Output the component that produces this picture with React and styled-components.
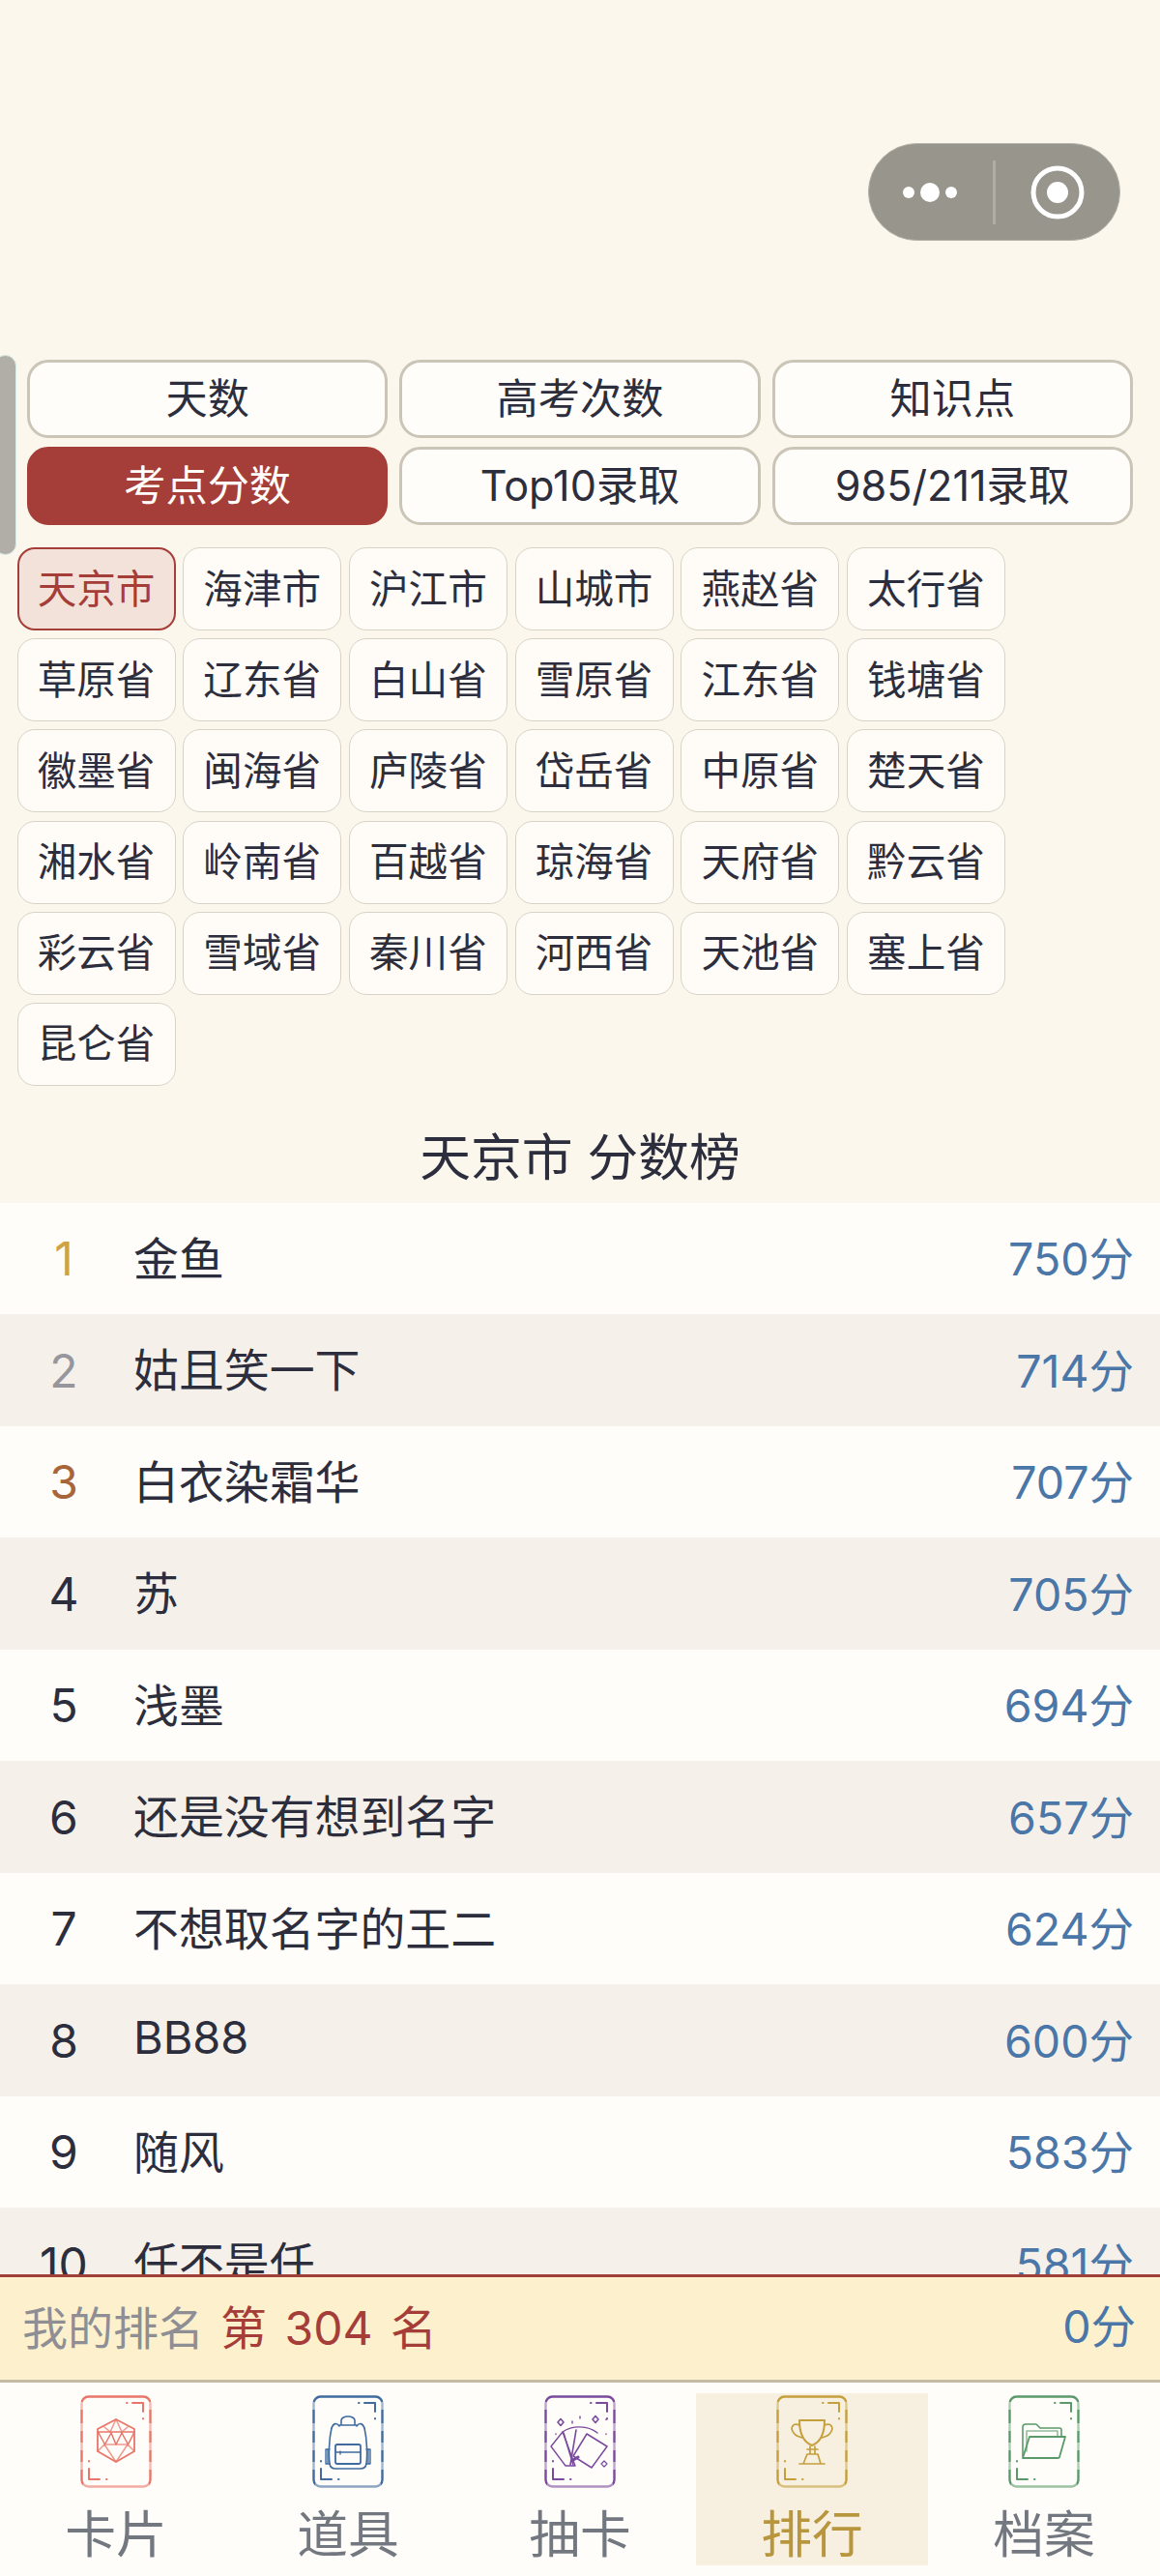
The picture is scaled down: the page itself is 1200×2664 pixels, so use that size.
import React from "react";
import styled, { createGlobalStyle } from "styled-components";

const Global = createGlobalStyle`
  html, body { margin: 0; padding: 0; background: #fbf7ec; }
  * { box-sizing: border-box; }
`;

const Page = styled.div`
  position: relative;
  width: 1200px;
  height: 2664px;
  display: flex;
  flex-direction: column;
  overflow: hidden;
  background: #fbf7ec;
  color: #2d2e3d;
  font-family: "Inter", "Noto Sans CJK SC", "Noto Sans", sans-serif;
  padding-top: 372px;
`;

const Capsule = styled.div`
  position: absolute;
  left: 898px;
  top: 148px;
  width: 261px;
  height: 101px;
  border-radius: 51px;
  background: #98958d;
  border: 1px solid #b4b1a9;
  display: flex;
  align-items: center;
`;
const CapsulePart = styled.div`
  flex: 1;
  height: 100%;
  display: flex;
  align-items: center;
  justify-content: center;
`;
const CapsuleDivider = styled.div`
  width: 3px;
  height: 66px;
  background: #b0ada6;
`;
const Handle = styled.div`
  position: absolute;
  left: -6px;
  top: 367px;
  width: 23px;
  height: 207px;
  border-radius: 12px;
  background: #b0aea6;
  border: 1px solid #d6ebe8;
`;

const TabGrid = styled.div`
  display: grid;
  grid-template-columns: repeat(3, 1fr);
  grid-auto-rows: 81px;
  gap: 9px 12px;
  padding: 0 28px;
`;
const TabBtn = styled.div`
  display: flex;
  align-items: center;
  justify-content: center;
  padding-bottom: 8px;
  border-radius: 22px;
  font-size: 43.2px;
  background: ${(p) => (p.$active ? "#a53d38" : "#fffdf9")};
  color: ${(p) => (p.$active ? "#fffdf9" : "#2d2e3d")};
  border: 3px solid ${(p) => (p.$active ? "#a53d38" : "#cbc5b7")};
`;

const ChipWrap = styled.div`
  display: flex;
  flex-wrap: wrap;
  gap: 8.2px 7.7px;
  padding: 23px 0 0 17.5px;
`;
const Chip = styled.div`
  width: 164px;
  height: 86px;
  display: flex;
  align-items: center;
  justify-content: center;
  padding-bottom: 6px;
  border-radius: 18px;
  font-size: 40.6px;
  background: ${(p) => (p.$active ? "#f3e2d9" : "#fffcf7")};
  color: ${(p) => (p.$active ? "#a53d38" : "#2d2e3d")};
  border: ${(p) => (p.$active ? "2.5px solid #a53d38" : "1.6px solid #d8d3c6")};
`;

const Title = styled.div`
  height: 121px;
  padding-top: 27px;
  line-height: 94px;
  text-align: center;
  font-size: 52.8px;
`;

const List = styled.div`
  flex: 1;
  min-height: 0;
  overflow: hidden;
`;
const Row = styled.div`
  height: 115.5px;
  display: flex;
  align-items: center;
  padding: 0 27px 0 26px;
  background: ${(p) => (p.$alt ? "#f5f1ea" : "#fffdf9")};
`;
const Rank = styled.div`
  width: 80px;
  text-align: center;
  font-size: 48px;
  color: ${(p) => p.$color};
`;
const Name = styled.div`
  flex: 1;
  margin: -6px 0 0 32px;
  font-size: 46.9px;
`;
const Score = styled.div`
  margin-top: -6px;
  font-size: 46.5px;
  color: #4a76a8;
`;

const MyBar = styled.div`
  height: 112px;
  flex: none;
  display: flex;
  align-items: center;
  padding: 0 25px 6px 23px;
  background: #fcf0cd;
  border-top: 3px solid #a04038;
  border-bottom: 3px solid #c5bca8;
  font-size: 47px;
`;
const MyLabel = styled.span`
  margin-top: -2px;
  color: #8e8e94;
`;
const MyRank = styled.span`
  flex: 1;
  margin: -2px 0 0 17px;
  font-size: 48px;
  word-spacing: 5px;
  color: #a53d38;
`;

const Nav = styled.div`
  height: 200px;
  flex: none;
  display: grid;
  grid-template-columns: repeat(5, 1fr);
  align-items: start;
  padding-top: 11px;
  background: #fffdf9;
`;
const NavItem = styled.div`
  height: 178px;
  display: flex;
  flex-direction: column;
  align-items: center;
  background: ${(p) => (p.$active ? "#f7f0e0" : "transparent")};
  color: ${(p) => (p.$active ? "#b8963e" : "#737880")};
`;
const NavLabel = styled.div`
  margin-top: 16px;
  font-size: 52.8px;
  line-height: 60px;
`;
const IconSvg = styled.svg`
  display: block;
  width: 100px;
  height: 100px;
  filter: blur(0.45px);
`;

const Frame = ({ color, bg, children }) => (
  <IconSvg viewBox="20 5 100 100" fill="none" stroke={color} strokeLinecap="round" strokeLinejoin="round">
    <rect x="34.5" y="8.5" width="71" height="93" rx="7" strokeWidth="2.4" />
    <path d="M87 15H98V24M98 31v.5M81 15h.5" strokeWidth="2" />
    <path d="M42 83V94H53M60 94h.5M42 75v.5" strokeWidth="2" />
    <g fill={bg} stroke="none" opacity="0.5">
      {[18, 40, 60, 80].map((y) => (
        <React.Fragment key={y}>
          <rect x="30" y={y - 4} width="9" height="8" />
          <rect x="101" y={y - 4} width="9" height="8" />
        </React.Fragment>
      ))}
      <rect x="36" y="98" width="68" height="6" opacity="0.8" />
    </g>
    {children}
  </IconSvg>
);

const D20 = () => (
  <g strokeWidth="1.5">
    <path d="M70 32 89 42V65L70 76 51 65V42Z" strokeWidth="1.8" />
    <path d="M51 45H89M52 46l6.5 12 6.5-12 5 12 6-12 6.5 12 6-12" />
    <path d="M58 58H82L70 76ZM58 58 51 65M82 58 89 65M64 45 70 32 76 45M58 40 64 45M82 40 76 45" opacity="0.75" />
  </g>
);
const Backpack = () => (
  <g strokeWidth="1.4">
    <path d="M53 41c2-5 5-6 8-2M87 41c-2-5-5-6-8-2M63 37v-4c0-2 3-4 7-4s7 2 7 4v4M61 38h18" strokeWidth="1.6" />
    <path d="M53 41C50 54 50 70 51 78c.5 3 3 5 6 5h26c3 0 5.500-2 6-5 1-8 1-24-2-37" strokeWidth="1.6" />
    <rect x="57" y="58" width="26" height="20" rx="2" strokeWidth="1.8" />
    <path d="M57 66H83M62 65v3" />
    <path d="M51 63H47V78H51M89 63H93V78H89M49 64V77M91 64V77" />
  </g>
);
const Cards = () => (
  <g strokeWidth="1.4">
    <path d="M50 31.500 53 35 50 38.500 47 35ZM86 28.500 89 32 86 35.500 83 32Z" strokeWidth="1.6" />
    <path d="M62 34v2M70 29v2M97 32v.5M45 47v.5M97 47v.5" />
    <path d="M40 60 52 45 65 80 55 80Z" />
    <path d="M60 79 66 43M63 79 53 46" strokeWidth="1.6" />
    <path d="M52 45C62 38 78 38 88 46" />
    <path d="M77 47 98 60 82 82 63 70Z" strokeWidth="1.5" />
    <path d="M63 74 68 71" strokeWidth="3" />
    <path d="M95 75 98 78 95 81 92 78Z" strokeWidth="1.2" />
  </g>
);
const Trophy = () => (
  <g strokeWidth="1.7">
    <path d="M57 33H83C83 46 80 55 70 59 60 55 57 46 57 33Z" strokeWidth="2" />
    <path d="M57 38C50 35 47 41 51 46 53 49 56 50 60 51M83 38C90 35 93 41 89 46 87 49 84 50 80 51" />
    <path d="M68 60V68M73 60V68M65 63H76M65 68H76L79 78H61ZM57 78H83" />
  </g>
);
const Folder = () => (
  <g strokeWidth="1.6">
    <path d="M48 70V40C48 38 49 37 51 37H62L66 41H86C87 41 88 42 88 43V49" />
    <path d="M52 65V44H84V49" opacity="0.65" />
    <path d="M48 72 55 50H92L86 71C86 72 85 72 84 72Z" strokeWidth="1.8" />
  </g>
);

const tabs = ["天数", "高考次数", "知识点", "考点分数", "Top10录取", "985/211录取"];
const regions = [
  "天京市", "海津市", "沪江市", "山城市", "燕赵省", "太行省",
  "草原省", "辽东省", "白山省", "雪原省", "江东省", "钱塘省",
  "徽墨省", "闽海省", "庐陵省", "岱岳省", "中原省", "楚天省",
  "湘水省", "岭南省", "百越省", "琼海省", "天府省", "黔云省",
  "彩云省", "雪域省", "秦川省", "河西省", "天池省", "塞上省",
  "昆仑省",
];
const rows = [
  ["金鱼", 750], ["姑且笑一下", 714], ["白衣染霜华", 707], ["苏", 705], ["浅墨", 694],
  ["还是没有想到名字", 657], ["不想取名字的王二", 624], ["BB88", 600], ["随风", 583], ["任不是任", 581],
];
const rankColor = (i) => ["#cfa244", "#96969c", "#a8653a"][i] || "#2d2e3d";
const navs = [
  ["卡片", "#e8766a", D20],
  ["道具", "#3f6b9e", Backpack],
  ["抽卡", "#7a4a9e", Cards],
  ["排行", "#c49f3c", Trophy],
  ["档案", "#5a9a6a", Folder],
];

export default function App() {
  return (
    <Page>
      <Global />
      <Capsule>
        <CapsulePart>
          <svg width="80" height="30" viewBox="0 0 80 30" fill="#fff">
            <circle cx="17" cy="15" r="6" />
            <circle cx="39" cy="15" r="10" />
            <circle cx="61" cy="15" r="6" />
          </svg>
        </CapsulePart>
        <CapsuleDivider />
        <CapsulePart>
          <svg width="60" height="60" viewBox="0 0 60 60" fill="none">
            <circle cx="30" cy="30" r="25" stroke="#fff" strokeWidth="5" />
            <circle cx="30" cy="30" r="11" fill="#fff" />
          </svg>
        </CapsulePart>
      </Capsule>
      <Handle />
      <TabGrid>
        {tabs.map((t) => (
          <TabBtn key={t} $active={t === "考点分数"}>{t}</TabBtn>
        ))}
      </TabGrid>
      <ChipWrap>
        {regions.map((r, i) => (
          <Chip key={r} $active={i === 0}>{r}</Chip>
        ))}
      </ChipWrap>
      <Title>天京市 分数榜</Title>
      <List>
        {rows.map(([n, s], i) => (
          <Row key={n} $alt={i % 2 === 1}>
            <Rank $color={rankColor(i)}>{i + 1}</Rank>
            <Name>{n}</Name>
            <Score>{s}分</Score>
          </Row>
        ))}
      </List>
      <MyBar>
        <MyLabel>我的排名</MyLabel>
        <MyRank>第 304 名</MyRank>
        <Score>0分</Score>
      </MyBar>
      <Nav>
        {navs.map(([label, color, Glyph], i) => (
          <NavItem key={label} $active={i === 3}>
            <Frame color={color} bg={i === 3 ? "#f7f0e0" : "#fffdf9"}>
              <Glyph />
            </Frame>
            <NavLabel>{label}</NavLabel>
          </NavItem>
        ))}
      </Nav>
    </Page>
  );
}
